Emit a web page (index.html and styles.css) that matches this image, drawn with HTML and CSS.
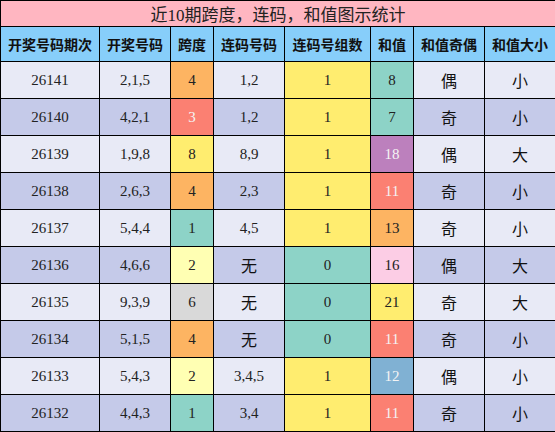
FILE: index.html
```html
<!DOCTYPE html>
<html lang="zh-CN">

<head>
    <meta charset="UTF-8">
    <title>近10期跨度，连码，和值图示统计</title>
    <link rel="stylesheet" href="styles.css">
</head>

<body>
    <table class="stats">
        <colgroup>
            <col class="c-issue">
            <col class="c-num">
            <col class="c-span">
            <col class="c-num">
            <col class="c-group">
            <col class="c-span">
            <col class="c-num">
            <col class="c-size">
        </colgroup>
        <thead>
            <tr class="title-row">
                <th colspan="8">近10期跨度，连码，和值图示统计</th>
            </tr>
            <tr class="head-row">
                <th>开奖号码期次</th>
                <th>开奖号码</th>
                <th>跨度</th>
                <th>连码号码</th>
                <th>连码号组数</th>
                <th>和值</th>
                <th>和值奇偶</th>
                <th>和值大小</th>
            </tr>
        </thead>
        <tbody>
            <tr>
                <td>26141</td><td>2,1,5</td><td class="orange">4</td><td>1,2</td>
                <td class="yellow">1</td><td class="teal">8</td><td class="cn">偶</td><td class="cn">小</td>
            </tr>
            <tr>
                <td>26140</td><td>4,2,1</td><td class="red">3</td><td>1,2</td>
                <td class="yellow">1</td><td class="teal">7</td><td class="cn">奇</td><td class="cn">小</td>
            </tr>
            <tr>
                <td>26139</td><td>1,9,8</td><td class="yellow">8</td><td>8,9</td>
                <td class="yellow">1</td><td class="purple">18</td><td class="cn">偶</td><td class="cn">大</td>
            </tr>
            <tr>
                <td>26138</td><td>2,6,3</td><td class="orange">4</td><td>2,3</td>
                <td class="yellow">1</td><td class="red">11</td><td class="cn">奇</td><td class="cn">小</td>
            </tr>
            <tr>
                <td>26137</td><td>5,4,4</td><td class="teal">1</td><td>4,5</td>
                <td class="yellow">1</td><td class="orange">13</td><td class="cn">奇</td><td class="cn">小</td>
            </tr>
            <tr>
                <td>26136</td><td>4,6,6</td><td class="pale">2</td><td class="cn">无</td>
                <td class="teal">0</td><td class="pink">16</td><td class="cn">偶</td><td class="cn">大</td>
            </tr>
            <tr>
                <td>26135</td><td>9,3,9</td><td class="gray">6</td><td class="cn">无</td>
                <td class="teal">0</td><td class="yellow">21</td><td class="cn">奇</td><td class="cn">大</td>
            </tr>
            <tr>
                <td>26134</td><td>5,1,5</td><td class="orange">4</td><td class="cn">无</td>
                <td class="teal">0</td><td class="red">11</td><td class="cn">奇</td><td class="cn">小</td>
            </tr>
            <tr>
                <td>26133</td><td>5,4,3</td><td class="pale">2</td><td>3,4,5</td>
                <td class="yellow">1</td><td class="blue">12</td><td class="cn">偶</td><td class="cn">小</td>
            </tr>
            <tr>
                <td>26132</td><td>4,4,3</td><td class="teal">1</td><td>3,4</td>
                <td class="yellow">1</td><td class="red">11</td><td class="cn">奇</td><td class="cn">小</td>
            </tr>
        </tbody>
    </table>
</body>

</html>
```

FILE: styles.css
```css
* {
    margin: 0;
    padding: 0;
    box-sizing: border-box;
}

body {
    background: #fff;
    font-family: "Liberation Serif", "Noto Sans CJK SC", serif;
    color: #222;
}

.stats {
    width: 555px;
    border-collapse: collapse;
    table-layout: fixed;
}

.c-issue {
    width: 99px;
}

.c-num {
    width: 71px;
}

.c-span {
    width: 43px;
}

.c-group {
    width: 86px;
}

.c-size {
    width: 71px;
}

.stats th,
.stats td {
    border: 1px solid #000;
    text-align: center;
    vertical-align: middle;
}

.title-row th {
    height: 26px;
    background: #ffb6c1;
    font-size: 17px;
    font-weight: normal;
    color: #222;
}

.head-row th {
    height: 35px;
    background: #87cefa;
    font-family: "Noto Sans CJK SC", sans-serif;
    font-size: 14px;
    font-weight: bold;
    color: #111;
}

.stats td {
    height: 37px;
    font-size: 15px;
    background: #e8eaf6;
}

.stats tbody tr:nth-child(even) td {
    background: #c5cae9;
}

.stats td.cn {
    font-family: "Noto Sans CJK SC", sans-serif;
    font-size: 16px;
    color: #111;
}

/* value cells, same weight as the even-row rule so order wins */
.stats tbody tr td.orange {
    background: #fdb462;
}

.stats tbody tr td.red {
    background: #fb8072;
    color: #f4f4f4;
}

.stats tbody tr td.yellow {
    background: #ffed6f;
}

.stats tbody tr td.teal {
    background: #8dd3c7;
}

.stats tbody tr td.pale {
    background: #ffffb3;
}

.stats tbody tr td.gray {
    background: #d9d9d9;
}

.stats tbody tr td.purple {
    background: #bc80bd;
    color: #f4f4f4;
}

.stats tbody tr td.pink {
    background: #fccde5;
}

.stats tbody tr td.blue {
    background: #80b1d3;
    color: #f4f4f4;
}
```
